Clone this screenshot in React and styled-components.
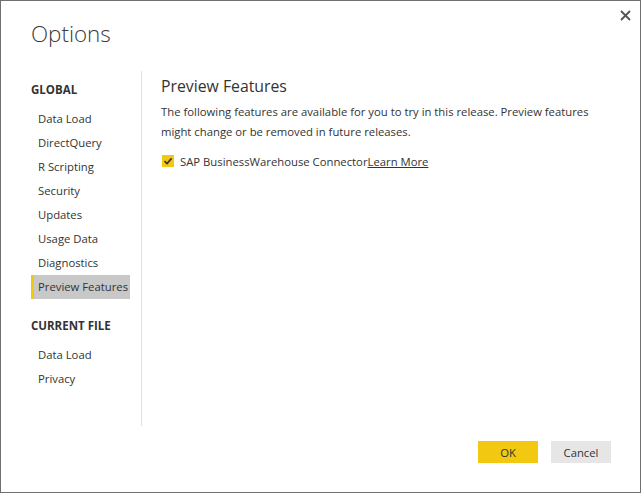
import React from "react";
import styled, { createGlobalStyle } from "styled-components";

const Global = createGlobalStyle`
  html, body { margin: 0; padding: 0; background: #fff; }
  body { font-family: "Segoe UI", "Open Sans", "Noto Sans", sans-serif; color: #333; }
`;

const Dialog = styled.div`
  box-sizing: border-box;
  width: 641px;
  height: 493px;
  border: 1px solid #6f6f6f;
  background: #fff;
  position: relative;
  display: flex;
  flex-direction: column;
`;

const Close = styled.button`
  position: absolute;
  top: 7px;
  right: 8px;
  width: 14px;
  height: 14px;
  padding: 0;
  border: none;
  background: none;
  display: flex;
  align-items: center;
  justify-content: center;
`;

const Title = styled.h1`
  margin: 0;
  padding: 18px 0 0 30px;
  height: 50px;
  box-sizing: border-box;
  font-size: 22.4px;
  font-weight: 300;
  line-height: 30px;
  color: #3a3a3a;
`;

const Body = styled.div`
  display: flex;
  flex: 1;
  padding-top: 20px;
`;

const Sidebar = styled.nav`
  box-sizing: border-box;
  width: 111px;
  margin-left: 30px;
  padding-top: 7px;
  border-right: 1px solid #e1e1e1;
  height: 355px;
  display: flex;
  flex-direction: column;
`;

const Section = styled.div`
  font-size: 11.5px;
  font-weight: 700;
  color: #333;
  height: 24px;
  line-height: 24px;
  margin-bottom: 5px;
  margin-top: ${(p) => p.$top || 0}px;
  white-space: nowrap;
`;

const Item = styled.div`
  box-sizing: border-box;
  width: 99px;
  height: 24px;
  line-height: 24px;
  font-size: 11.3px;
  color: #333;
  white-space: nowrap;
  background: ${(p) => (p.$active ? "#c8c8c8" : "transparent")};
  border-left: 3px solid ${(p) => (p.$active ? "#f2c811" : "transparent")};
  padding-left: 4px;
`;

const Main = styled.div`
  flex: 1;
  padding-left: 19px;
  padding-right: 30px;
`;

const Heading = styled.h2`
  margin: 2px 0 0;
  font-size: 15.8px;
  font-weight: 400;
  line-height: 26px;
  color: #333;
`;

const Para = styled.p`
  margin: 3px 0 0;
  font-size: 11.3px;
  line-height: 20px;
  color: #333;
`;

const CheckRow = styled.label`
  display: flex;
  align-items: center;
  margin-top: 9px;
  height: 20px;
  font-size: 11.3px;
  color: #333;
`;

const Box = styled.span`
  width: 12px;
  height: 12px;
  background: #f2c811;
  display: inline-flex;
  align-items: center;
  justify-content: center;
  margin: 0 6px 0 1px;
`;

const Link = styled.a`
  color: #333;
  text-decoration: underline;
`;

const Footer = styled.div`
  display: flex;
  justify-content: flex-end;
  gap: 13px;
  padding: 0 29px 29px 0;
`;

const Button = styled.button`
  width: 60px;
  height: 22px;
  border: none;
  padding: 0;
  font-family: inherit;
  font-size: 11.3px;
  color: #333;
  background: ${(p) => (p.$primary ? "#f2c811" : "#e6e6e6")};
`;

export default function App() {
  const global = ["Data Load", "DirectQuery", "R Scripting", "Security", "Updates", "Usage Data", "Diagnostics", "Preview Features"];
  const file = ["Data Load", "Privacy"];
  return (
    <>
      <Global />
      <Dialog>
        <Close aria-label="Close">
          <svg width="11" height="11" viewBox="0 0 11 11">
            <path d="M1 1L10 10M10 1L1 10" stroke="#555" strokeWidth="1.8" />
          </svg>
        </Close>
        <Title>Options</Title>
        <Body>
          <Sidebar>
            <Section>GLOBAL</Section>
            {global.map((g) => (
              <Item key={g} $active={g === "Preview Features"}>{g}</Item>
            ))}
            <Section $top={15}>CURRENT FILE</Section>
            {file.map((g) => (
              <Item key={g}>{g}</Item>
            ))}
          </Sidebar>
          <Main>
            <Heading>Preview Features</Heading>
            <Para>
              The following features are available for you to try in this release. Preview features might change or be removed in future releases.
            </Para>
            <CheckRow>
              <Box>
                <svg width="10" height="10" viewBox="0 0 10 10">
                  <path d="M1.5 5.2L4 7.6L8.6 2.4" stroke="#333" strokeWidth="1.6" fill="none" />
                </svg>
              </Box>
              SAP BusinessWarehouse Connector<Link>Learn More</Link>
            </CheckRow>
          </Main>
        </Body>
        <Footer>
          <Button $primary>OK</Button>
          <Button>Cancel</Button>
        </Footer>
      </Dialog>
    </>
  );
}
